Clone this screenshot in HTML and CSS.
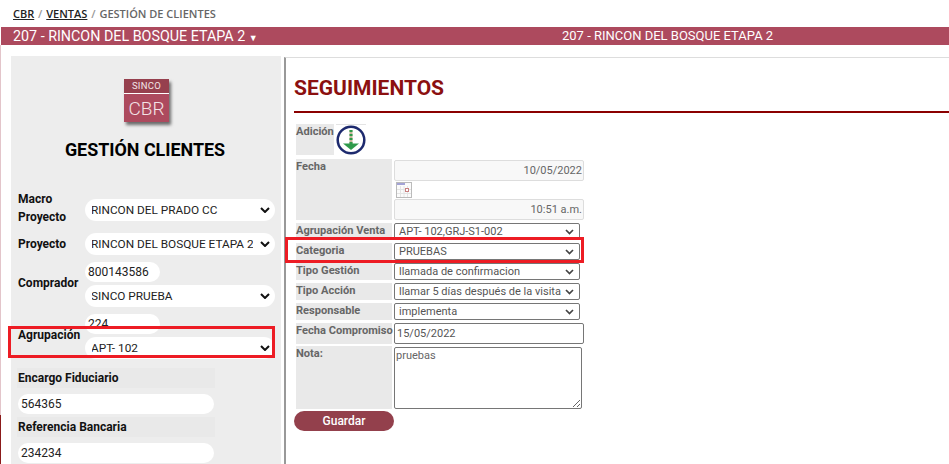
FILE: index.html
```html
<!DOCTYPE html>
<html lang="en">
<head>
    <meta charset="UTF-8">
    <meta name="viewport" content="width=device-width, initial-scale=1.0">
    <title>Gestión de Clientes</title>
    <link rel="stylesheet" href="styles.css">
</head>
<body>
    <div class="breadcrumb"><a href="#">CBR</a> <span class="sep">/</span> <a href="#">VENTAS</a> <span class="sep">/</span> GESTIÓN DE CLIENTES</div>
    <div class="project-bar">
        <span class="project-name">207 - RINCON DEL BOSQUE ETAPA 2 <small>▼</small></span>
        <span class="project-center">207 - RINCON DEL BOSQUE ETAPA 2</span>
    </div>

    <div class="main">
        <div class="sidebar">
            <div class="logo">
                <div class="logo-top">SINCO</div>
                <div class="logo-bottom">CBR</div>
            </div>
            <h2 class="sidebar-title">GESTIÓN CLIENTES</h2>

            <div class="filters">
                <label class="filter-label">Macro<br>Proyecto</label>
                <select class="pill-select macro"><option>RINCON DEL PRADO CC</option></select>

                <label class="filter-label">Proyecto</label>
                <select class="pill-select"><option>RINCON DEL BOSQUE ETAPA 2</option></select>

                <label class="filter-label raised">Comprador</label>
                <div class="stack">
                    <input class="pill-input short" type="text" value="800143586">
                    <select class="pill-select"><option>SINCO PRUEBA</option></select>
                </div>

                <label class="filter-label raised">Agrupación</label>
                <div class="stack">
                    <input class="pill-input short" type="text" value="224">
                    <select class="pill-select"><option>APT- 102</option></select>
                </div>
            </div>

            <div class="field-label first">Encargo Fiduciario</div>
            <input class="pill-input wide" type="text" value="564365">
            <div class="field-label">Referencia Bancaria</div>
            <input class="pill-input wide" type="text" value="234234">
        </div>

        <div class="panel">
            <h1 class="panel-title">SEGUIMIENTOS</h1>

            <div class="add-row">
                <span class="cell-label add-label">Adición</span>
                <svg class="add-icon" width="30" height="30" viewBox="0 0 30 30">
                    <circle cx="15" cy="15" r="13.300" fill="#fff" stroke="#1d2a6e" stroke-width="2.500"/>
                    <path d="M15 5v14" stroke="#c9b79c" stroke-width="3"/>
                    <path d="M15 5v14" stroke="#2f9a4b" stroke-width="3" stroke-dasharray="2 2"/>
                    <path d="M7 18.500h16L15 25z" fill="#2f9a4b"/>
                </svg>
            </div>

            <div class="form-grid">
                <span class="cell-label">Fecha</span>
                <div class="date-cell">
                    <input class="read-input" type="text" value="10/05/2022" readonly>
                    <svg class="cal-icon" width="16" height="16" viewBox="0 0 16 16">
                        <rect x="0.500" y="0.500" width="15" height="15" fill="#fbfbfb" stroke="#bbb"/>
                        <path d="M1 2h8" stroke="#a3a3d6" stroke-width="2"/>
                        <path d="M1 7.500h14M1 11.500h14M4.500 4v11M8 4v11M11.500 4v11" stroke="#e4e4e4"/>
                        <rect x="9.500" y="6.500" width="3" height="3" fill="#fff" stroke="#c98080"/>
                    </svg>
                    <input class="read-input" type="text" value="10:51 a.m." readonly>
                </div>

                <span class="cell-label">Agrupación Venta</span>
                <select class="form-select"><option>APT- 102,GRJ-S1-002</option></select>

                <span class="cell-label">Categoria</span>
                <select class="form-select"><option>PRUEBAS</option></select>

                <span class="cell-label">Tipo Gestión</span>
                <select class="form-select"><option>llamada de confirmacion</option></select>

                <span class="cell-label">Tipo Acción</span>
                <select class="form-select"><option>llamar 5 días después de la visita</option></select>

                <span class="cell-label">Responsable</span>
                <select class="form-select"><option>implementa</option></select>

                <span class="cell-label">Fecha Compromiso</span>
                <input class="form-input" type="text" value="15/05/2022">

                <span class="cell-label note-label">Nota:</span>
                <textarea class="form-note">pruebas</textarea>
            </div>

            <button class="save-button" type="button">Guardar</button>
        </div>
    </div>

    <!-- red highlight boxes on top of the capture -->
    <div class="highlight highlight-left"></div>
    <div class="highlight highlight-right"></div>
</body>
</html>
```

FILE: styles.css
```css
html, body {
    height: 464px;
    overflow: hidden;
}

body {
    margin: 0;
    position: relative;
    font-family: Roboto, Arial, sans-serif;
    background-color: #fff;
    background-image: linear-gradient(#e3c5ca 0, #e3c5ca 370px, #8b1a1a 370px);
    background-position: 0 45px;
    background-size: 1px 419px;
    background-repeat: no-repeat;
}

.breadcrumb {
    height: 27px;
    line-height: 27px;
    padding-left: 13px;
    font-family: "Open Sans", Arial, sans-serif;
    font-size: 11px;
    font-weight: 600;
    color: #666;
    box-sizing: border-box;
}

.breadcrumb a {
    color: #222;
}

.breadcrumb .sep {
    color: #999;
    margin: 0 1px;
}

.project-bar {
    display: flex;
    height: 18px;
    line-height: 18px;
    margin-left: 1px;
    background-color: #ad4a5e;
    color: #fff;
    font-size: 14.300px;
}

.project-name {
    width: 561px;
    padding-left: 12px;
    box-sizing: border-box;
}

.project-name small {
    font-size: 9px;
    vertical-align: 0;
}

.project-center {
    font-size: 13px;
}

.main {
    display: flex;
    align-items: flex-start;
    margin-top: 11px;
}

/* left column */
.sidebar {
    width: 270px;
    height: 420px;
    margin-left: 11px;
    padding: 23px 0 0 6px;
    box-sizing: border-box;
    background-color: #ededed;
}

.logo {
    width: 45px;
    margin-left: 107px;
    box-shadow: 2px 3px 3px rgba(0, 0, 0, 0.55);
    color: #f3e3e6;
    text-align: center;
}

.logo-top {
    height: 14px;
    line-height: 14px;
    font-size: 9.500px;
    letter-spacing: 0.3px;
    background-color: #96404e;
    border-bottom: 1px solid #fff;
}

.logo-bottom {
    height: 28px;
    line-height: 29px;
    font-size: 19px;
    font-weight: 300;
    background-color: #ad4a5e;
}

.sidebar-title {
    margin: 17px 0 0 0;
    width: 256px;
    text-align: center;
    font-size: 17.900px;
    line-height: 22px;
    font-weight: bold;
    color: #000;
}

.filters {
    display: grid;
    grid-template-columns: 67px 190px;
    align-items: center;
    row-gap: 7px;
    margin: 29px 0 0 1px;
}

.filter-label {
    font-size: 12px;
    line-height: 18px;
    font-weight: bold;
    color: #111;
}

.filter-label.raised {
    padding-bottom: 3px;
}

.stack {
    display: flex;
    flex-direction: column;
    align-items: flex-start;
    gap: 3px;
}

.pill-select {
    appearance: none;
    width: 190px;
    height: 22px;
    padding: 0 22px 0 7px;
    border: none;
    border-radius: 11px;
    background-color: #fff;
    background-image: url("data:image/svg+xml,%3Csvg xmlns='http://www.w3.org/2000/svg' width='10' height='6' viewBox='0 0 10 6'%3E%3Cpath d='M1 1l4 4 4-4' fill='none' stroke='%23111' stroke-width='2'/%3E%3C/svg%3E");
    background-repeat: no-repeat;
    background-position: right 5px center;
    font-family: Roboto, Arial, sans-serif;
    font-size: 11.800px;
    text-indent: -1px;
    color: #222;
}

.macro {
    margin-top: 4px;
}

.pill-input {
    height: 20px;
    padding: 0 3px;
    box-sizing: border-box;
    border: none;
    border-radius: 10px;
    background-color: #fff;
    font-family: Roboto, Arial, sans-serif;
    font-size: 12px;
    color: #222;
}

.pill-input.short {
    width: 75px;
}

.pill-input.wide {
    display: block;
    width: 196px;
    margin: 6px 0 3px 1px;
}

.field-label {
    width: 198px;
    height: 20px;
    line-height: 20px;
    padding-left: 1px;
    box-sizing: border-box;
    background-color: #e9e9e9;
    font-size: 12px;
    font-weight: bold;
    color: #111;
}

.field-label.first {
    margin-top: 9px;
}

/* right column */
.panel {
    flex: 1;
    height: 407px;
    margin: 1px 0 0 3px;
    padding: 0 0 0 8px;
    border-left: 2px solid #999;
    border-top: 1px solid #ddd;
}

.panel-title {
    margin: 0;
    padding-top: 19px;
    height: 55px;
    line-height: 23px;
    box-sizing: border-box;
    font-size: 21px;
    font-weight: bold;
    color: #8b1010;
    border-bottom: 2px solid #8b0000;
}

.add-row {
    display: flex;
    gap: 2px;
    margin: 11px 0 0 2px;
    height: 31px;
}

.cell-label {
    background-color: #e9e9e9;
    font-size: 11.100px;
    line-height: 16px;
    font-weight: bold;
    white-space: nowrap;
    color: #666;
}

.add-label {
    width: 38px;
}

.add-icon {
    display: block;
    border-top: 1px solid #e4e4e4;
}

.form-grid {
    display: grid;
    grid-template-columns: 96px 190px;
    column-gap: 2px;
    row-gap: 3px;
    margin: 4px 0 0 2px;
}

.date-cell {
    display: flex;
    flex-direction: column;
    align-items: flex-start;
    padding-top: 1px;
}

.read-input {
    width: 190px;
    height: 21px;
    box-sizing: border-box;
    padding: 0 1px;
    border: 1px solid #ddd;
    border-radius: 2px;
    background-color: #f8f8f8;
    text-align: right;
    font-family: Roboto, Arial, sans-serif;
    font-size: 11px;
    color: #666;
}

.cal-icon {
    display: block;
    margin: 1px 0 1px 2px;
}

.form-select {
    appearance: none;
    width: 186px;
    height: 17px;
    padding: 0 16px 0 4px;
    background-color: #fff;
    background-image: url("data:image/svg+xml,%3Csvg xmlns='http://www.w3.org/2000/svg' width='9' height='6' viewBox='0 0 9 6'%3E%3Cpath d='M1 1l3.500 3.500L8 1' fill='none' stroke='%23444' stroke-width='1.700'/%3E%3C/svg%3E");
    background-repeat: no-repeat;
    background-position: right 5px center;
    border: 1px solid #767676;
    border-radius: 2px;
    font-family: Roboto, Arial, sans-serif;
    font-size: 11px;
    color: #555;
}

.form-input {
    width: 190px;
    height: 21px;
    box-sizing: border-box;
    padding: 0 2px;
    border: 1px solid #767676;
    border-radius: 2px;
    font-family: Roboto, Arial, sans-serif;
    font-size: 11px;
    color: #555;
}

.note-label {
    margin-top: -1px;
}

.form-note {
    display: block;
    width: 188px;
    height: 62px;
    margin: 0;
    padding: 1px;
    box-sizing: border-box;
    border: 1px solid #767676;
    border-radius: 2px;
    font-family: Roboto, Arial, sans-serif;
    font-size: 11px;
    color: #666;
}

.save-button {
    display: block;
    width: 100px;
    height: 20px;
    margin-top: 2px;
    padding: 0;
    border: none;
    border-radius: 10px;
    background-color: #93404c;
    color: #fff;
    font-family: Roboto, Arial, sans-serif;
    font-size: 12px;
    font-weight: 500;
    cursor: pointer;
}

.highlight {
    position: absolute;
    box-sizing: border-box;
    border: 3px solid #ed1c24;
}

.highlight-left {
    left: 8px;
    top: 326px;
    width: 267px;
    height: 32px;
}

.highlight-right {
    left: 285px;
    top: 237px;
    width: 299px;
    height: 26px;
}
```
